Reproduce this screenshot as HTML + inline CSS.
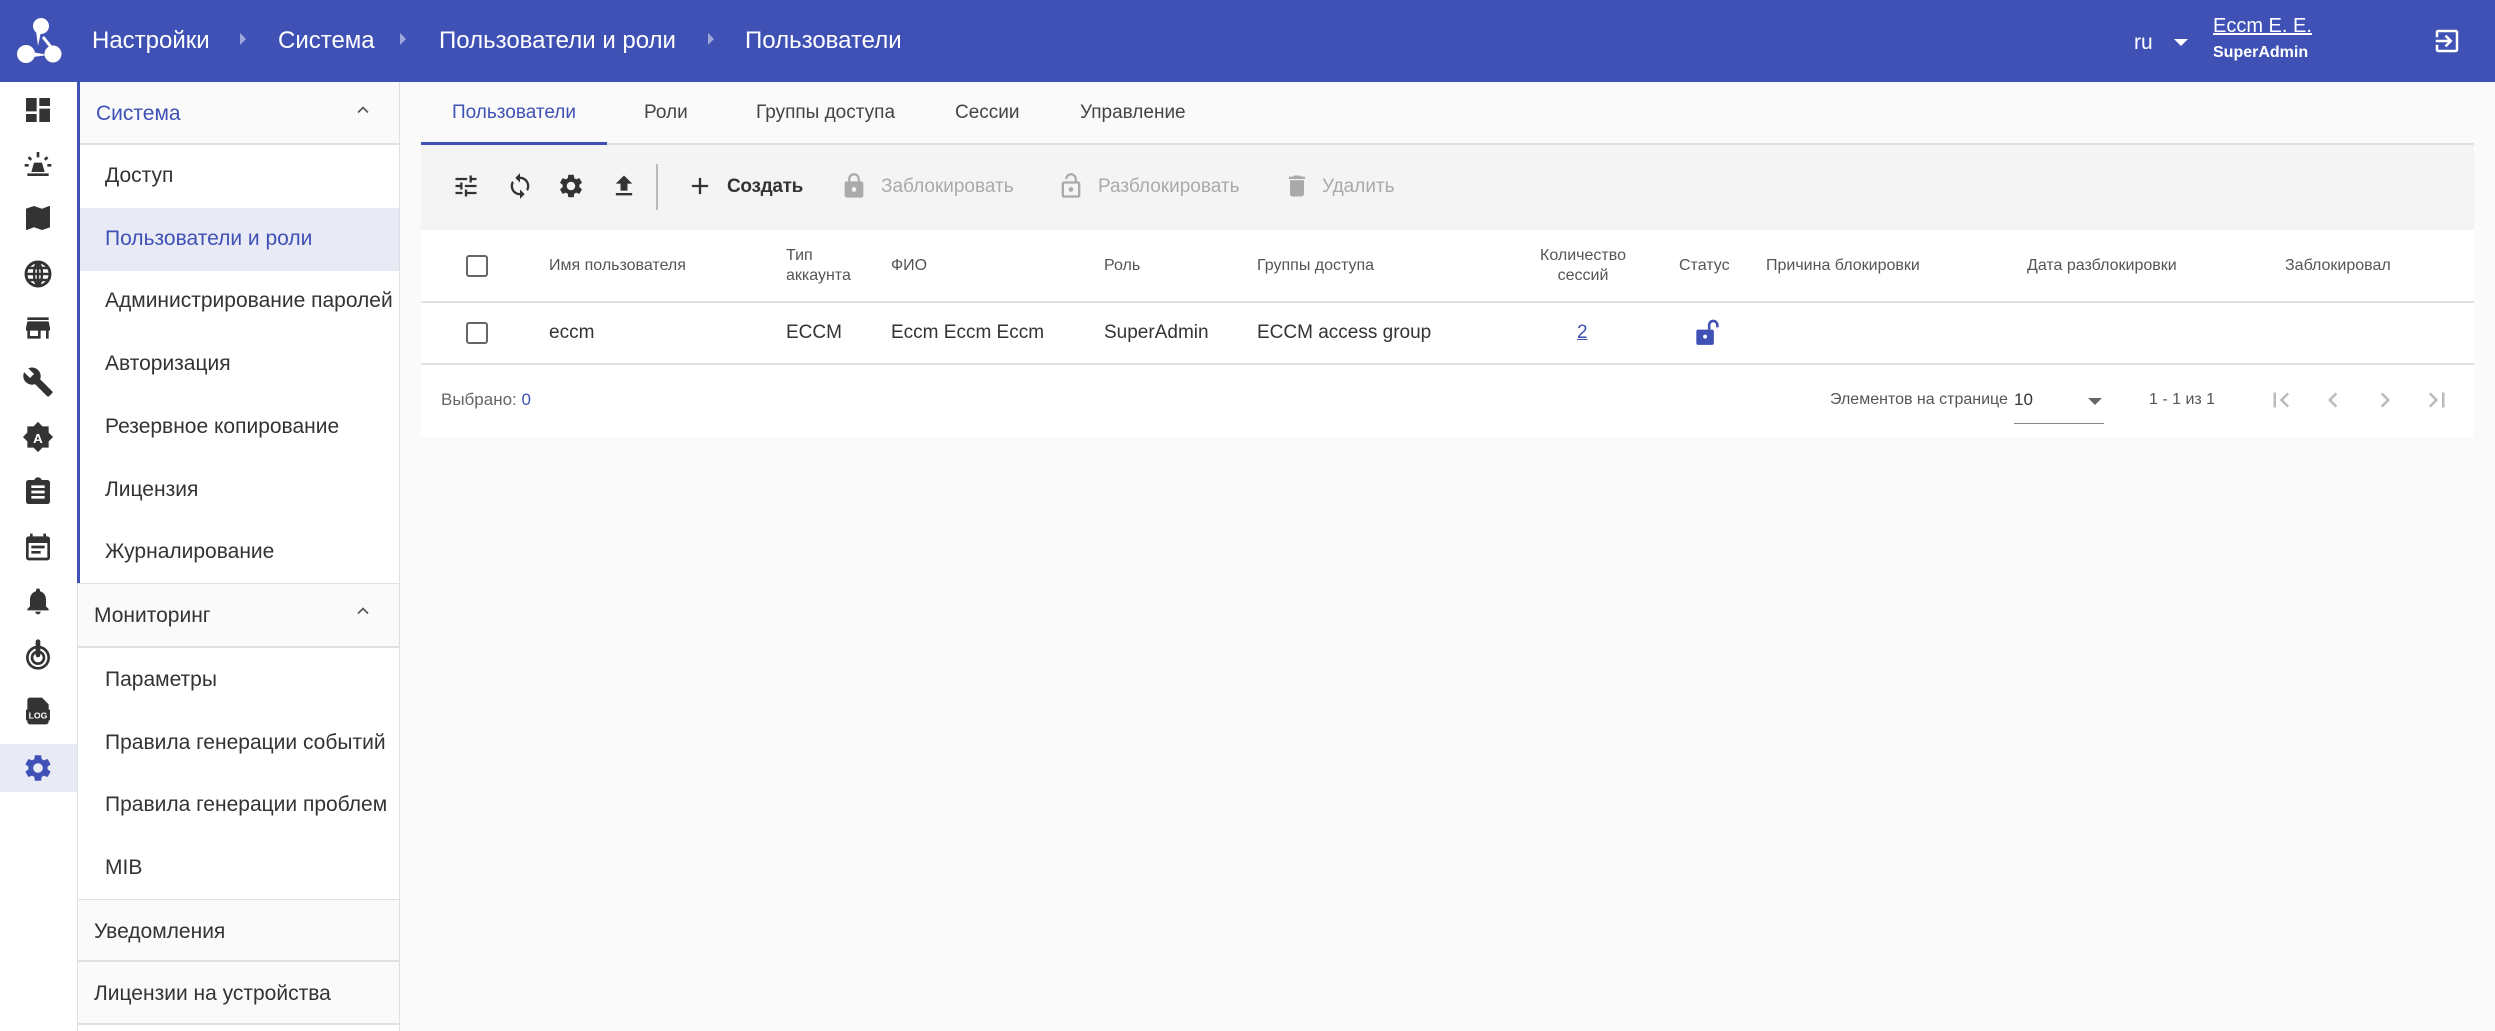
<!DOCTYPE html>
<html><head><meta charset="utf-8">
<style>
*{box-sizing:border-box;margin:0;padding:0}
body{width:2495px;height:1031px;overflow:hidden;background:#fafafa;font-family:"Liberation Sans","Noto Sans CJK SC",sans-serif;position:relative;color:#333}
.a{position:absolute;white-space:nowrap}
.hdr{left:0;top:0;width:2495px;height:82px;background:#3f51b5}
.bc{color:#fff;font-size:24px;top:27px}
.sep{top:33px;width:0;height:0;border-top:6px solid transparent;border-bottom:6px solid transparent;border-left:6px solid rgba(255,255,255,.5)}
.rail{left:0;top:82px;width:78px;height:949px;background:#fff;border-right:1px solid #e0e0e0}
.nav{left:78px;top:82px;width:322px;height:949px;background:#fff;border-right:1px solid #e0e0e0}
.sh{left:78px;width:321px;height:63px;background:#fafafa;border-bottom:2px solid #e0e0e0;font-size:21px;padding:20px 0 0 16px;color:#333}
.it{left:105px;font-size:21px;color:#333}
.th{font-size:16px;color:#555}
.td{font-size:19px;color:#333}
.tb{font-size:19px;color:#aaa}
.cb{width:22px;height:22px;border:2px solid #666;border-radius:3px}
svg{position:absolute}
</style></head><body>
<div class="a hdr"></div>
<svg style="left:12px;top:14px" width="56" height="56" viewBox="0 0 56 56"><circle cx="29" cy="12" r="8" fill="#fff"/><path d="M24 17 L26 32 L29 18 Z" fill="#fff"/><circle cx="14" cy="40" r="9" fill="#fff"/><circle cx="41" cy="40" r="8.5" fill="#fff"/><path d="M20 38 L36 41 L21 43 Z" fill="#fff"/><path d="M31 23 L39 33" stroke="#fff" stroke-width="3"/></svg>
<div class="a bc" style="left:92px">Настройки</div>
<div class="a sep" style="left:240px"></div>
<div class="a bc" style="left:278px">Система</div>
<div class="a sep" style="left:400px"></div>
<div class="a bc" style="left:439px">Пользователи и роли</div>
<div class="a sep" style="left:708px"></div>
<div class="a bc" style="left:745px">Пользователи</div>
<div class="a" style="left:2134px;top:31px;color:#fff;font-size:21px">ru</div>
<div class="a" style="left:2174px;top:39px;border-left:7px solid transparent;border-right:7px solid transparent;border-top:7px solid #fff"></div>
<div class="a" style="left:2213px;top:15px;color:#fff;font-size:20px;text-decoration:underline">Eccm E. E.</div>
<div class="a" style="left:2213px;top:44px;color:#fff;font-size:16px;font-weight:bold">SuperAdmin</div>
<svg style="left:2432px;top:26px" width="30" height="30" viewBox="0 0 24 24"><path fill="#fff" d="M10.09 15.59L11.5 17l5-5-5-5-1.41 1.41L12.67 11H3v2h9.67l-2.58 2.59zM19 3H5c-1.11 0-2 .9-2 2v4h2V5h14v14H5v-4H3v4c0 1.1.89 2 2 2h14c1.1 0 2-.9 2-2V5c0-1.1-.9-2-2-2z"/></svg>

<div class="a rail"></div>
<div class="a" style="left:0;top:744px;width:77px;height:48px;background:#e8eaf6"></div>
<svg style="left:22px;top:94px" width="32" height="32" viewBox="0 0 24 24"><path fill="#333" d="M3 13h8V3H3v10zm0 8h8v-6H3v6zm10 0h8V11h-8v10zm0-18v6h8V3h-8z"/></svg>
<svg style="left:22px;top:148px" width="32" height="32" viewBox="0 0 24 24"><path fill="#333" d="M7 18h10l-2-7H9zM4 19h16v2H4zM11 3h2v4h-2zM4.2 7.6l1.4-1.4 2 2-1.4 1.4zM16.4 8.2l2-2 1.4 1.4-2 2zM2 12h3v2H2zM19 12h3v2h-3z"/></svg>
<svg style="left:22px;top:202px" width="32" height="32" viewBox="0 0 24 24"><path fill="#333" d="M20.5 3l-.16.03L15 5.1 9 3 3.36 4.9c-.21.07-.36.25-.36.48V20.5c0 .28.22.5.5.5l.16-.03L9 18.9l6 2.1 5.64-1.9c.21-.07.36-.25.36-.48V3.5c0-.28-.22-.5-.5-.5z"/></svg>
<svg style="left:22px;top:258px" width="32" height="32" viewBox="0 0 24 24"><circle cx="12" cy="12" r="9" fill="none" stroke="#333" stroke-width="2.2"/><path d="M3 12h18M12 3v18M5 7.5h14M5 16.5h14M12 3c-4 4-4 14 0 18M12 3c4 4 4 14 0 18" fill="none" stroke="#333" stroke-width="1.8"/></svg>
<svg style="left:22px;top:312px" width="32" height="32" viewBox="0 0 24 24"><path fill="#333" d="M20 4H4v2h16V4zm1 10v-2l-1-5H4l-1 5v2h1v6h10v-6h4v6h2v-6h1zm-9 4H6v-4h6v4z"/></svg>
<svg style="left:22px;top:366px" width="32" height="32" viewBox="0 0 24 24"><path fill="#333" d="M22.7 19l-9.1-9.1c.9-2.3.4-5-1.5-6.9-2-2-5-2.4-7.4-1.3L9 6 6 9 1.6 4.7C.4 7.1.9 10.1 2.9 12.1c1.9 1.9 4.6 2.4 6.9 1.5l9.1 9.1c.4.4 1 .4 1.4 0l2.3-2.3c.5-.4.5-1.1.1-1.4z"/></svg>
<svg style="left:22px;top:421px" width="32" height="32" viewBox="0 0 24 24"><path fill="#333" d="M20 8.69V4h-4.69L12 .69 8.69 4H4v4.69L.69 12 4 15.31V20h4.69L12 23.31 15.31 20H20v-4.69L23.31 12 20 8.69z"/><text x="12" y="16.5" font-size="10" font-weight="bold" fill="#fff" text-anchor="middle" font-family="Liberation Sans">A</text></svg>
<svg style="left:22px;top:476px" width="32" height="32" viewBox="0 0 24 24"><path fill="#333" d="M19 3h-4.18C14.4 1.84 13.3 1 12 1c-1.3 0-2.4.84-2.82 2H5c-1.1 0-2 .9-2 2v14c0 1.1.9 2 2 2h14c1.1 0 2-.9 2-2V5c0-1.1-.9-2-2-2zm-2 14H7v-2h10v2zm0-4H7v-2h10v2zm0-4H7V7h10v2z"/></svg>
<svg style="left:22px;top:531px" width="32" height="32" viewBox="0 0 24 24"><path fill="#333" d="M19 4h-1V2h-2v2H8V2H6v2H5c-1.1 0-2 .9-2 2v14c0 1.1.9 2 2 2h14c1.1 0 2-.9 2-2V6c0-1.1-.9-2-2-2zm0 16H5V9h14v11zM7 11h10v2H7zm0 4h7v2H7z"/></svg>
<svg style="left:22px;top:585px" width="32" height="32" viewBox="0 0 24 24"><path fill="#333" d="M12 22c1.1 0 2-.9 2-2h-4c0 1.1.89 2 2 2zm6-6v-5c0-3.07-1.64-5.64-4.5-6.32V4c0-.83-.67-1.5-1.5-1.5s-1.5.67-1.5 1.5v.68C7.63 5.36 6 7.920 6 11v5l-2 2v1h16v-1l-2-2z"/></svg>
<svg style="left:22px;top:639px" width="32" height="32" viewBox="0 0 24 24"><circle cx="12" cy="14" r="8" fill="none" stroke="#333" stroke-width="2"/><circle cx="12" cy="14" r="4.5" fill="none" stroke="#333" stroke-width="2"/><path d="M12 2v10" stroke="#333" stroke-width="3.5" stroke-linecap="round"/></svg>
<svg style="left:22px;top:695px" width="32" height="32" viewBox="0 0 24 24"><path fill="#333" d="M6 2h9l5 5v4H4V4c0-1.1.9-2 2-2zM3 11h18v8H3zM4 19h16v1c0 1.1-.9 2-2 2H6c-1.1 0-2-.9-2-2z"/><text x="12" y="17.8" font-size="6.5" font-weight="bold" fill="#fff" text-anchor="middle" font-family="Liberation Sans">LOG</text></svg>
<svg style="left:22px;top:752px" width="32" height="32" viewBox="0 0 24 24"><path fill="#3f51b5" d="M19.14 12.94c.04-.3.06-.61.06-.94 0-.32-.02-.64-.07-.94l2.03-1.58a.49.49 0 00.12-.61l-1.92-3.32a.488.488 0 00-.59-.22l-2.39.96c-.5-.38-1.03-.7-1.62-.94l-.36-2.540a.484.484 0 00-.48-.41h-3.84c-.24 0-.43.17-.47.41l-.36 2.54c-.59.24-1.13.57-1.62.94l-2.39-.96c-.22-.08-.47 0-.59.22L2.74 8.87c-.12.21-.08.47.12.61l2.03 1.58c-.05.3-.09.63-.09.94s.02.64.07.94l-2.03 1.58a.49.49 0 00-.12.61l1.92 3.32c.12.22.37.29.59.22l2.39-.96c.5.38 1.03.7 1.62.94l.36 2.54c.05.24.24.41.48.41h3.84c.24 0 .44-.17.47-.41l.36-2.54c.59-.24 1.13-.56 1.62-.94l2.39.96c.22.08.47 0 .59-.22l1.92-3.32c.12-.22.07-.47-.12-.61l-2.01-1.58zM12 15.6c-1.98 0-3.6-1.62-3.6-3.6s1.62-3.6 3.6-3.6 3.6 1.62 3.6 3.6-1.62 3.6-3.6 3.6z"/></svg>

<div class="a nav"></div>
<div class="a" style="left:77px;top:82px;width:3px;height:501px;background:#3f51b5"></div>
<div class="a sh" style="top:82px;color:#3f51b5;left:80px;width:319px">Система</div>
<svg style="left:353px;top:100px" width="20" height="20" viewBox="0 0 24 24"><path d="M6 15l6-6 6 6" fill="none" stroke="#555" stroke-width="2"/></svg>
<div class="a" style="left:80px;top:208px;width:319px;height:63px;background:#e8eaf6"></div>
<div class="a it" style="top:164px">Доступ</div>
<div class="a it" style="top:227px;color:#3f51b5">Пользователи и роли</div>
<div class="a it" style="top:289px">Администрирование паролей</div>
<div class="a it" style="top:352px">Авторизация</div>
<div class="a it" style="top:415px">Резервное копирование</div>
<div class="a it" style="top:478px">Лицензия</div>
<div class="a it" style="top:540px">Журналирование</div>
<div class="a sh" style="top:583px;border-top:1px solid #e0e0e0;height:65px">Мониторинг</div>
<svg style="left:353px;top:601px" width="20" height="20" viewBox="0 0 24 24"><path d="M6 15l6-6 6 6" fill="none" stroke="#555" stroke-width="2"/></svg>
<div class="a it" style="top:668px">Параметры</div>
<div class="a it" style="top:731px">Правила генерации событий</div>
<div class="a it" style="top:793px">Правила генерации проблем</div>
<div class="a it" style="top:856px">MIB</div>
<div class="a sh" style="top:899px;border-top:1px solid #e0e0e0">Уведомления</div>
<div class="a sh" style="top:962px">Лицензии на устройства</div>

<div class="a" style="left:421px;top:143px;width:2053px;height:2px;background:#e0e0e0"></div>
<div class="a" style="left:421px;top:142px;width:186px;height:3px;background:#3f51b5"></div>
<div class="a" style="left:452px;top:102px;font-size:19px;color:#3f51b5">Пользователи</div>
<div class="a" style="left:644px;top:102px;font-size:19px;color:#444">Роли</div>
<div class="a" style="left:756px;top:102px;font-size:19px;color:#444">Группы доступа</div>
<div class="a" style="left:955px;top:102px;font-size:19px;color:#444">Сессии</div>
<div class="a" style="left:1080px;top:102px;font-size:19px;color:#444">Управление</div>

<div class="a" style="left:421px;top:145px;width:2053px;height:85px;background:#f4f4f4"></div>
<svg style="left:452px;top:172px" width="28" height="28" viewBox="0 0 24 24"><path fill="#333" d="M3 17v2h6v-2H3zM3 5v2h10V5H3zm10 16v-2h8v-2h-8v-2h-2v6h2zM7 9v2H3v2h4v2h2V9H7zm14 4v-2H11v2h10zm-6-4h2V7h4V5h-4V3h-2v6z"/></svg>
<svg style="left:506px;top:172px" width="28" height="28" viewBox="0 0 24 24"><path fill="#333" d="M12 4V1L8 5l4 4V6c3.31 0 6 2.69 6 6 0 1.01-.25 1.97-.7 2.8l1.46 1.46C19.54 15.03 20 13.57 20 12c0-4.42-3.58-8-8-8zm0 14c-3.31 0-6-2.69-6-6 0-1.01.25-1.970.7-2.8L5.24 7.74C4.46 8.97 4 10.43 4 12c0 4.42 3.58 8 8 8v3l4-4-4-4v3z"/></svg>
<svg style="left:557px;top:172px" width="28" height="28" viewBox="0 0 24 24"><path fill="#333" d="M19.14 12.94c.04-.3.06-.61.06-.94 0-.32-.02-.64-.07-.94l2.03-1.58a.49.49 0 00.12-.61l-1.92-3.32a.488.488 0 00-.59-.22l-2.39.96c-.5-.38-1.03-.7-1.62-.94l-.36-2.54a.484.484 0 00-.48-.41h-3.84c-.24 0-.43.17-.47.41l-.36 2.54c-.59.24-1.13.57-1.62.94l-2.39-.96c-.22-.08-.47 0-.59.22L2.74 8.87c-.12.21-.08.47.12.61l2.03 1.58c-.05.3-.09.63-.09.94s.02.64.07.94l-2.03 1.58a.49.49 0 00-.12.61l1.92 3.32c.12.22.37.29.59.22l2.39-.96c.5.38 1.03.7 1.62.94l.36 2.54c.05.24.24.41.48.41h3.84c.24 0 .44-.17.47-.41l.36-2.54c.59-.24 1.13-.56 1.62-.94l2.39.96c.22.08.47 0 .59-.22l1.92-3.32c.12-.22.07-.47-.12-.61l-2.01-1.58zM12 15.6c-1.98 0-3.6-1.62-3.6-3.6s1.62-3.6 3.6-3.6 3.6 1.62 3.6 3.6-1.62 3.6-3.6 3.6z"/></svg>
<svg style="left:610px;top:172px" width="28" height="28" viewBox="0 0 24 24"><path fill="#333" d="M5 20h14v-2H5v2zm0-10h4v6h6v-6h4l-7-7-7 7z"/></svg>
<div class="a" style="left:656px;top:164px;width:2px;height:46px;background:#bbb"></div>
<svg style="left:686px;top:172px" width="28" height="28" viewBox="0 0 24 24"><path fill="#333" d="M19 13h-6v6h-2v-6H5v-2h6V5h2v6h6v2z"/></svg>
<div class="a" style="left:727px;top:176px;font-size:19px;color:#333;font-weight:bold;letter-spacing:-0.3px">Создать</div>
<svg style="left:840px;top:172px" width="28" height="28" viewBox="0 0 24 24"><path fill="#aaa" d="M18 8h-1V6c0-2.76-2.24-5-5-5S7 3.24 7 6v2H6c-1.1 0-2 .9-2 2v10c0 1.1.9 2 2 2h12c1.1 0 2-.9 2-2V10c0-1.1-.9-2-2-2zm-6 9c-1.1 0-2-.9-2-2s.9-2 2-2 2 .9 2 2-.9 2-2 2zm3.1-9H8.9V6c0-1.71 1.39-3.1 3.1-3.1 1.71 0 3.1 1.39 3.1 3.1v2z"/></svg>
<div class="a tb" style="left:881px;top:176px">Заблокировать</div>
<svg style="left:1057px;top:172px" width="28" height="28" viewBox="0 0 24 24"><path fill="#aaa" d="M12 17c1.1 0 2-.9 2-2s-.9-2-2-2-2 .9-2 2 .9 2 2 2zm6-9h-1V6c0-2.76-2.24-5-5-5S7 3.24 7 6h1.9c0-1.71 1.39-3.1 3.1-3.1 1.71 0 3.1 1.39 3.1 3.1v2H6c-1.1 0-2 .9-2 2v10c0 1.1.9 2 2 2h12c1.1 0 2-.9 2-2V10c0-1.1-.9-2-2-2zm0 12H6V10h12v10z"/></svg>
<div class="a tb" style="left:1098px;top:176px">Разблокировать</div>
<svg style="left:1283px;top:172px" width="28" height="28" viewBox="0 0 24 24"><path fill="#aaa" d="M6 19c0 1.1.9 2 2 2h8c1.1 0 2-.9 2-2V7H6v12zM19 4h-3.5l-1-1h-5l-1 1H5v2h14V4z"/></svg>
<div class="a tb" style="left:1322px;top:176px">Удалить</div>

<div class="a" style="left:421px;top:230px;width:2053px;height:207px;background:#fff"></div>
<div class="a" style="left:421px;top:301px;width:2053px;height:2px;background:#e0e0e0"></div>
<div class="a" style="left:421px;top:363px;width:2053px;height:2px;background:#e0e0e0"></div>
<div class="a cb" style="left:466px;top:255px"></div>
<div class="a th" style="left:549px;top:257px">Имя пользователя</div>
<div class="a th" style="left:786px;top:246px;line-height:20px">Тип<br>аккаунта</div>
<div class="a th" style="left:891px;top:257px">ФИО</div>
<div class="a th" style="left:1104px;top:257px">Роль</div>
<div class="a th" style="left:1257px;top:257px">Группы доступа</div>
<div class="a th" style="left:1583px;top:246px;line-height:20px;text-align:center;transform:translateX(-50%)">Количество<br>сессий</div>
<div class="a th" style="left:1679px;top:257px">Статус</div>
<div class="a th" style="left:1766px;top:257px">Причина блокировки</div>
<div class="a th" style="left:2027px;top:257px">Дата разблокировки</div>
<div class="a th" style="left:2285px;top:257px">Заблокировал</div>
<div class="a cb" style="left:466px;top:322px"></div>
<div class="a td" style="left:549px;top:322px">eccm</div>
<div class="a td" style="left:786px;top:322px">ECCM</div>
<div class="a td" style="left:891px;top:322px">Eccm Eccm Eccm</div>
<div class="a td" style="left:1104px;top:322px">SuperAdmin</div>
<div class="a td" style="left:1257px;top:322px">ECCM access group</div>
<div class="a td" style="left:1577px;top:322px;color:#3f51b5;text-decoration:underline">2</div>
<svg style="left:1694px;top:318px" width="28" height="28" viewBox="0 0 24 24"><rect x="2" y="10" width="15" height="13" rx="1.5" fill="#3f51b5"/><path d="M13 10V6a3.5 3.5 0 017 0v2" fill="none" stroke="#3f51b5" stroke-width="2.2"/><circle cx="9.5" cy="16" r="1.7" fill="#fff"/></svg>

<div class="a" style="left:441px;top:390px;font-size:17px;color:#666">Выбрано: <span style="color:#3f51b5">0</span></div>
<div class="a" style="left:1830px;top:391px;font-size:16px;color:#555">Элементов на странице</div>
<div class="a" style="left:2014px;top:390px;font-size:17px;color:#333">10</div>
<div class="a" style="left:2088px;top:398px;border-left:7px solid transparent;border-right:7px solid transparent;border-top:7px solid #666"></div>
<div class="a" style="left:2014px;top:423px;width:90px;height:1px;background:#888"></div>
<div class="a" style="left:2149px;top:391px;font-size:16px;color:#555">1 - 1 из 1</div>
<svg style="left:2266px;top:385px" width="30" height="30" viewBox="0 0 24 24"><path fill="#bbb" d="M18.41 16.59L13.82 12l4.59-4.59L17 6l-6 6 6 6zM6 6h2v12H6z"/></svg>
<svg style="left:2318px;top:385px" width="30" height="30" viewBox="0 0 24 24"><path fill="#bbb" d="M15.41 7.41L14 6l-6 6 6 6 1.41-1.41L10.83 12z"/></svg>
<svg style="left:2370px;top:385px" width="30" height="30" viewBox="0 0 24 24"><path fill="#bbb" d="M10 6L8.59 7.41 13.17 12l-4.58 4.59L10 18l6-6z"/></svg>
<svg style="left:2422px;top:385px" width="30" height="30" viewBox="0 0 24 24"><path fill="#bbb" d="M5.59 7.41L10.18 12l-4.59 4.59L7 18l6-6-6-6zM16 6h2v12h-2z"/></svg>
</body></html>
